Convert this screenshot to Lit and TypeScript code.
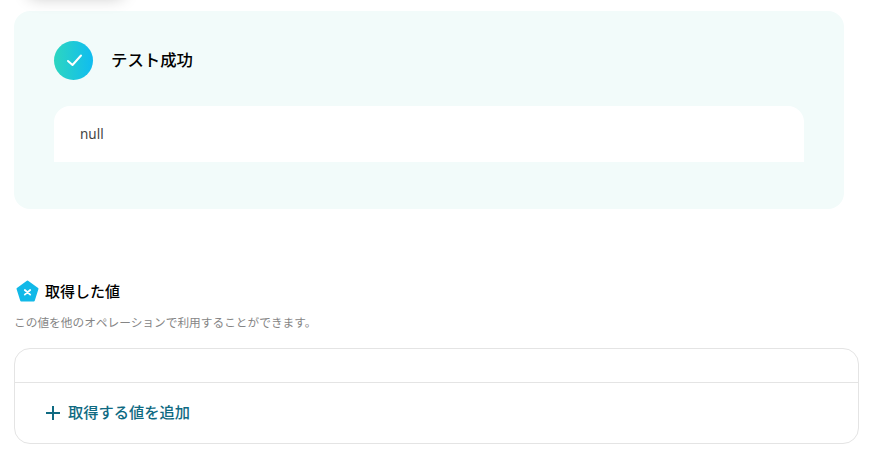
import { LitElement, html, css } from 'lit';
import { customElement } from 'lit/decorators.js';

@customElement('app-root')
export class AppRoot extends LitElement {
  static styles = css`
    :host {
      display: block;
      position: relative;
      height: 451px;
      overflow: hidden;
      background: #fff;
      font-family: 'Noto Sans', 'Noto Sans CJK JP', sans-serif;
      color: #000;
    }

    .page {
      display: flex;
      flex-direction: column;
      padding: 11px 12px 0 14px;
    }

    /* shadow of a menu scrolled off the top */
    .shadow {
      position: absolute;
      left: 28px;
      top: -28px;
      width: 96px;
      height: 24px;
      border-radius: 8px;
      box-shadow: 0 2px 16px rgba(0, 0, 0, 0.22);
    }

    .result {
      width: 830px;
      height: 198px;
      box-sizing: border-box;
      padding: 30px 40px 0;
      background: #f2fbfa;
      border-radius: 16px;
    }

    .result-head {
      display: flex;
      align-items: center;
      gap: 18px;
      height: 39px;
    }

    .check {
      display: flex;
      align-items: center;
      justify-content: center;
      width: 39px;
      height: 39px;
      border-radius: 50%;
      background: linear-gradient(90deg, #2dd6c0, #10bcf0);
    }

    .result-title {
      font-size: 16.4px;
      font-weight: 500;
      line-height: 37px;
      padding-bottom: 2px;
    }

    .output {
      box-sizing: border-box;
      height: 56px;
      margin-top: 26px;
      padding: 0 26px;
      background: #fff;
      border-radius: 16px 16px 0 0;
      font-size: 13.5px;
      line-height: 56px;
      color: #444;
    }

    .values {
      margin-top: 70px;
    }

    .values-head {
      display: flex;
      align-items: center;
      gap: 6px;
      padding-left: 2px;
      height: 24px;
    }

    .values-title {
      font-size: 15px;
      font-weight: 500;
      line-height: 24px;
    }

    .values-note {
      margin-top: 10px;
      font-size: 11.7px;
      line-height: 18px;
      color: #858585;
    }

    .table {
      box-sizing: border-box;
      width: 845px;
      height: 96px;
      margin-top: 17px;
      border: 1px solid #e4e4e4;
      border-radius: 16px;
    }

    .table-empty {
      height: 33px;
      border-bottom: 1px solid #e4e4e4;
    }

    .add {
      display: flex;
      align-items: center;
      gap: 7px;
      height: 60px;
      padding-left: 30px;
      color: #0f6a82;
      font-size: 15.25px;
      font-weight: 500;
    }

    .add span {
      padding-bottom: 5px;
    }
  `;

  render() {
    return html`
      <div class="shadow"></div>
      <div class="page">
        <section class="result">
          <div class="result-head">
            <span class="check">
              <svg width="18" height="18" viewBox="0 0 18 18" fill="none">
                <path d="M3 9 L7.5 13 L16 3.5" stroke="#fff" stroke-width="2" stroke-linecap="round" stroke-linejoin="round" />
              </svg>
            </span>
            <span class="result-title">テスト成功</span>
          </div>
          <div class="output">null</div>
        </section>

        <section class="values">
          <div class="values-head">
            <svg width="23" height="23" viewBox="0 0 23 23">
              <path d="M11.5 1.5 L21.5 8.8 L17.8 20.5 H5.2 L1.5 8.8 Z" fill="#12b9e8" stroke="#12b9e8" stroke-width="2" stroke-linejoin="round" />
              <path d="M8.8 10 L14.2 14.6 M14.2 10 L8.8 14.6" stroke="#fff" stroke-width="1.8" stroke-linecap="round" />
            </svg>
            <span class="values-title">取得した値</span>
          </div>
          <div class="values-note">この値を他のオペレーションで利用することができます。</div>
          <div class="table">
            <div class="table-empty"></div>
            <div class="add">
              <svg width="16" height="16" viewBox="0 0 16 16">
                <path d="M8 1 V15 M1 8 H15" stroke="#0f6a82" stroke-width="2" />
              </svg>
              <span>取得する値を追加</span>
            </div>
          </div>
        </section>
      </div>
    `;
  }
}
